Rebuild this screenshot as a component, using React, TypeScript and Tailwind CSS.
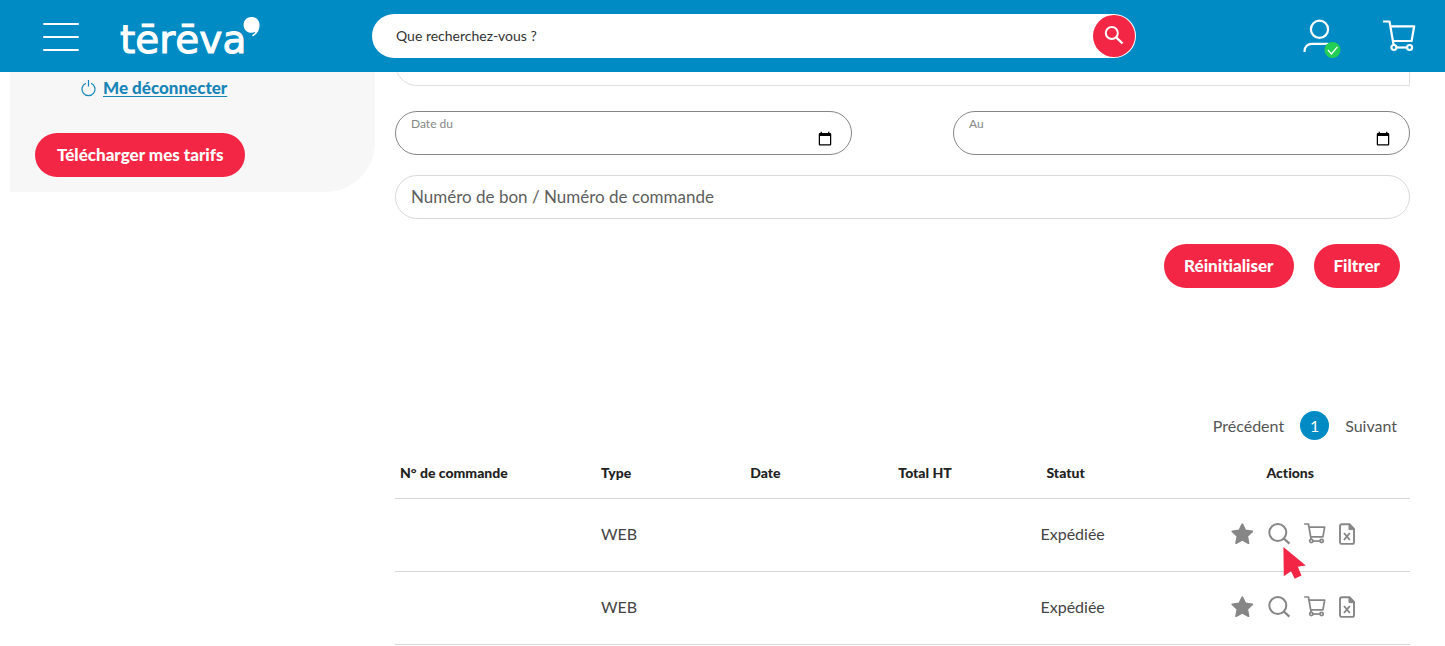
import React from "react";

const ACTION = "flex cursor-pointer items-center text-[#868686]";

function Logo() {
  return (
    <a href="#" aria-label="tērēva" className="relative ml-[41px] block h-[72px] w-[140px] text-white">
      <span className="block pt-[20px] font-['DejaVu_Sans',sans-serif] text-[39px] leading-10 [-webkit-text-stroke:1px_white]">tērēva</span>
      <svg aria-hidden="true" viewBox="0 0 17 21" className="absolute top-[17px] left-[123px] h-[21px] w-[17px]" fill="currentColor">
        <path d="M8.5 0C13.2 0 16.6 3.4 16.6 8.2c0 4.600-2.300 8.600-6.600 11.300l-1-1.200c2-1.200 3.200-2.300 3.400-3.500-1.200.7-2.400 1-3.900 1C3.800 15.800.6 12.500.6 8S3.800 0 8.500 0z" />
      </svg>
    </a>
  );
}

function CartIcon({ className, stroke }: { className: string; stroke: number }) {
  return (
    <svg aria-hidden="true" viewBox="0 0 33 32" className={className} fill="none" stroke="currentColor" strokeWidth={stroke} strokeLinejoin="round">
      <path d="M0 1.500h6.500L10.600 25M7.300 6.300h23.900L28.600 21H10" />
      <path d="M13.500 27.500h10.500" />
      <circle cx="10.900" cy="27.500" r="2.500" />
      <circle cx="26.600" cy="27.500" r="2.500" />
    </svg>
  );
}

function Header() {
  return (
    <header className="relative z-10 flex h-[72px] items-center bg-[#008bc5] pl-[43px] pr-[29px] text-white">
      <button type="button" aria-label="Menu" className="flex h-[30px] w-9 flex-col justify-between pt-[2px]">
        <span className="h-[2px] w-full rounded-full bg-white" />
        <span className="h-[2px] w-full rounded-full bg-white" />
        <span className="h-[2px] w-full rounded-full bg-white" />
      </button>
      <Logo />
      <form className="ml-[112px] mr-[167px] flex h-11 flex-1 items-center rounded-full bg-white pr-px" onSubmit={(e) => e.preventDefault()}>
        <input
          type="text"
          aria-label="Que recherchez-vous ?"
          placeholder="Que recherchez-vous ?"
          className="h-full min-w-0 flex-1 rounded-full bg-transparent pb-[2px] pl-6 text-sm text-[#333] outline-none placeholder:text-[#333]"
        />
        <button type="submit" aria-label="Rechercher" className="flex size-[42px] items-center justify-center rounded-full bg-[#f32745]">
          <svg aria-hidden="true" viewBox="0 0 20 20" className="size-5" fill="none" stroke="currentColor" strokeWidth="2">
            <circle cx="7.800" cy="7" r="6" />
            <path d="M12.200 11.400 18.500 17.500" strokeWidth="2.400" />
          </svg>
        </button>
      </form>
      <a href="#" aria-label="Mon compte" className="block">
        <svg aria-hidden="true" viewBox="0 0 38 44" className="h-11 w-[38px]" fill="none" stroke="currentColor" strokeWidth="2.200">
          <circle cx="16.500" cy="15.300" r="8.600" />
          <path d="M1.600 38v-1.200c0-4 3.200-7 7-7h15.500c2 0 4.200.6 5.400 2" />
          <circle cx="29.500" cy="36" r="8" fill="#22ce53" stroke="none" />
          <path d="m24.900 36 3.500 4 6-7.200" strokeWidth="1.300" />
        </svg>
      </a>
      <a href="#" aria-label="Panier" className="ml-[42px] block">
        <CartIcon className="h-8 w-[33px]" stroke={2.2} />
      </a>
    </header>
  );
}

function Sidebar() {
  return (
    <aside className="ml-[10px] h-[120px] w-[365px] shrink-0 rounded-br-[50px] bg-[#f7f7f7]">
      <a href="#" className="ml-[71px] flex h-8 items-center gap-[7px] text-[17px] font-black text-[#1785b8]">
        <svg aria-hidden="true" viewBox="0 0 15 17" className="h-[17px] w-[15px]" fill="none" stroke="currentColor" strokeWidth="1.200">
          <path d="M5 3.200a6.500 6.500 0 1 0 5 0M7.500 0v6.500" />
        </svg>
        <span className="underline underline-offset-2">Me déconnecter</span>
      </a>
      <button type="button" className="mt-[29px] ml-[25px] h-11 rounded-full bg-[#f32745] px-[22px] text-[17px] font-black text-white">
        Télécharger mes tarifs
      </button>
    </aside>
  );
}

function DateField({ id, label }: { id: string; label: string }) {
  return (
    <div className="relative">
      <label htmlFor={id} className="absolute top-1 left-4 text-xs leading-[18px] text-[#868686]">
        {label}
      </label>
      <input
        id={id}
        type="date"
        className="block h-11 w-full rounded-full border border-[#868686] bg-transparent pt-3 pr-4 pl-4 text-base text-black [&::-webkit-datetime-edit]:opacity-0"
      />
    </div>
  );
}

function Filters() {
  return (
    <form className="-mt-[30px]" onSubmit={(e) => e.preventDefault()}>
      <select aria-label="Statut" className="block h-11 w-full appearance-none rounded-l-[22px] border border-[#dedede] bg-white" />
      <div className="mt-[25px] grid grid-cols-2 gap-[101px]">
        <DateField id="date-from" label="Date du" />
        <DateField id="date-to" label="Au" />
      </div>
      <input
        type="text"
        aria-label="Numéro de bon / Numéro de commande"
        placeholder="Numéro de bon / Numéro de commande"
        className="mt-5 block h-11 w-full rounded-full border border-[#d9d9d9] px-[15px] pb-[2px] text-[17px] text-[#555] placeholder:text-[#5e5e5e]"
      />
      <div className="mt-[25px] flex justify-end gap-5 pr-[10px] text-[17px] font-black text-white">
        <button type="reset" className="h-11 rounded-full bg-[#f32745] px-5">Réinitialiser</button>
        <button type="submit" className="h-11 rounded-full bg-[#f32745] px-5">Filtrer</button>
      </div>
    </form>
  );
}

function RowActions({ pointed }: { pointed: boolean }) {
  return (
    <div className="flex items-center gap-[13px] pl-[60px]">
      <button type="button" aria-label="Favori" className={ACTION}>
        <svg aria-hidden="true" viewBox="0 0 24 24" className="size-6" fill="currentColor" stroke="currentColor" strokeWidth="1.800" strokeLinejoin="round">
          <path d="m12.300 2.200 3 6.300 7 .9-5.100 4.800 1.300 6.900-6.200-3.400-6.200 3.400 1.300-6.900-5.100-4.800 7-.9z" />
        </svg>
      </button>
      <button type="button" aria-label="Voir" className={"relative " + ACTION}>
        <svg aria-hidden="true" viewBox="0 0 24 24" className="size-6" fill="none" stroke="currentColor" strokeWidth="2">
          <circle cx="10.800" cy="10.500" r="8.500" />
          <path d="m16.800 16.500 5.600 5.200" strokeWidth="2.300" />
        </svg>
        {pointed && (
          <svg aria-hidden="true" viewBox="0 0 24 33" className="absolute top-[25px] left-4 h-[33px] w-6" fill="#f32745">
            <path d="M.4 0 22.800 18.500l-8 1.300L18.500 28.500 11.700 31.800 8 24.300.8 29.300z" />
          </svg>
        )}
      </button>
      <button type="button" aria-label="Ajouter au panier" className={ACTION}>
        <CartIcon className="h-[21px] w-[22px]" stroke={2.6} />
      </button>
      <button type="button" aria-label="Exporter" className={ACTION}>
        <svg aria-hidden="true" viewBox="0 0 16 22" className="h-[22px] w-4" fill="none" stroke="currentColor" strokeWidth="1.900">
          <path d="M3 1.300h7.500L15 6v13c0 1-.7 1.900-1.700 1.900H2.700c-1 0-1.700-.9-1.700-1.900V3.200c0-1 .7-1.900 2-1.900z" />
          <path d="M10 1.300V6.600h5z" fill="currentColor" strokeWidth="1" />
          <path d="m5 10 5.800 7M10.800 10l-5.800 7" strokeWidth="1.900" />
        </svg>
      </button>
    </div>
  );
}

const ORDERS = [
  { id: 1, type: "WEB", status: "Expédiée" },
  { id: 2, type: "WEB", status: "Expédiée" },
];

function Orders() {
  return (
    <section className="mt-[123px]">
      <nav aria-label="Pagination" className="flex items-center justify-end gap-4 pr-[13px] text-base text-[#555]">
        <a href="#">Précédent</a>
        <a href="#" aria-current="page" className="flex size-[29px] items-center justify-center rounded-full bg-[#008bc5] text-white">1</a>
        <a href="#">Suivant</a>
      </nav>
      <table className="mt-[9px] w-full table-fixed border-collapse text-left text-base text-[#444]">
        <colgroup>
          <col className="w-[19.800%]" />
          <col className="w-[14.700%]" />
          <col className="w-[14.600%]" />
          <col className="w-[14%]" />
          <col className="w-[13.300%]" />
          <col className="w-[23.600%]" />
        </colgroup>
        <thead className="text-sm text-[#222]">
          <tr className="h-[49px] border-b border-[#d6d6d6]">
            <th className="pl-[5px] font-black">N° de commande</th>
            <th className="pl-[5px] font-black">Type</th>
            <th className="pl-[5px] font-black">Date</th>
            <th className="pl-[5px] font-black">Total HT</th>
            <th className="pl-[11px] font-black">Statut</th>
            <th className="text-center font-black">Actions</th>
          </tr>
        </thead>
        <tbody>
          {ORDERS.map((order, i) => (
            <tr key={order.id} className="h-[73px] border-b border-[#d6d6d6]">
              <td />
              <td className="pb-[2px] pl-[5px]">{order.type}</td>
              <td />
              <td />
              <td className="pb-[2px] pl-[5px]">{order.status}</td>
              <td className="pb-[2px]">
                <RowActions pointed={i === 0} />
              </td>
            </tr>
          ))}
        </tbody>
      </table>
    </section>
  );
}

export default function App() {
  return (
    <div className="bg-white font-['Lato','Liberation_Sans',sans-serif] [font-variant-ligatures:none]">
      <Header />
      <div className="flex items-start">
        <Sidebar />
        <main className="ml-5 mr-[35px] min-w-0 flex-1">
          <Filters />
          <Orders />
        </main>
      </div>
    </div>
  );
}
